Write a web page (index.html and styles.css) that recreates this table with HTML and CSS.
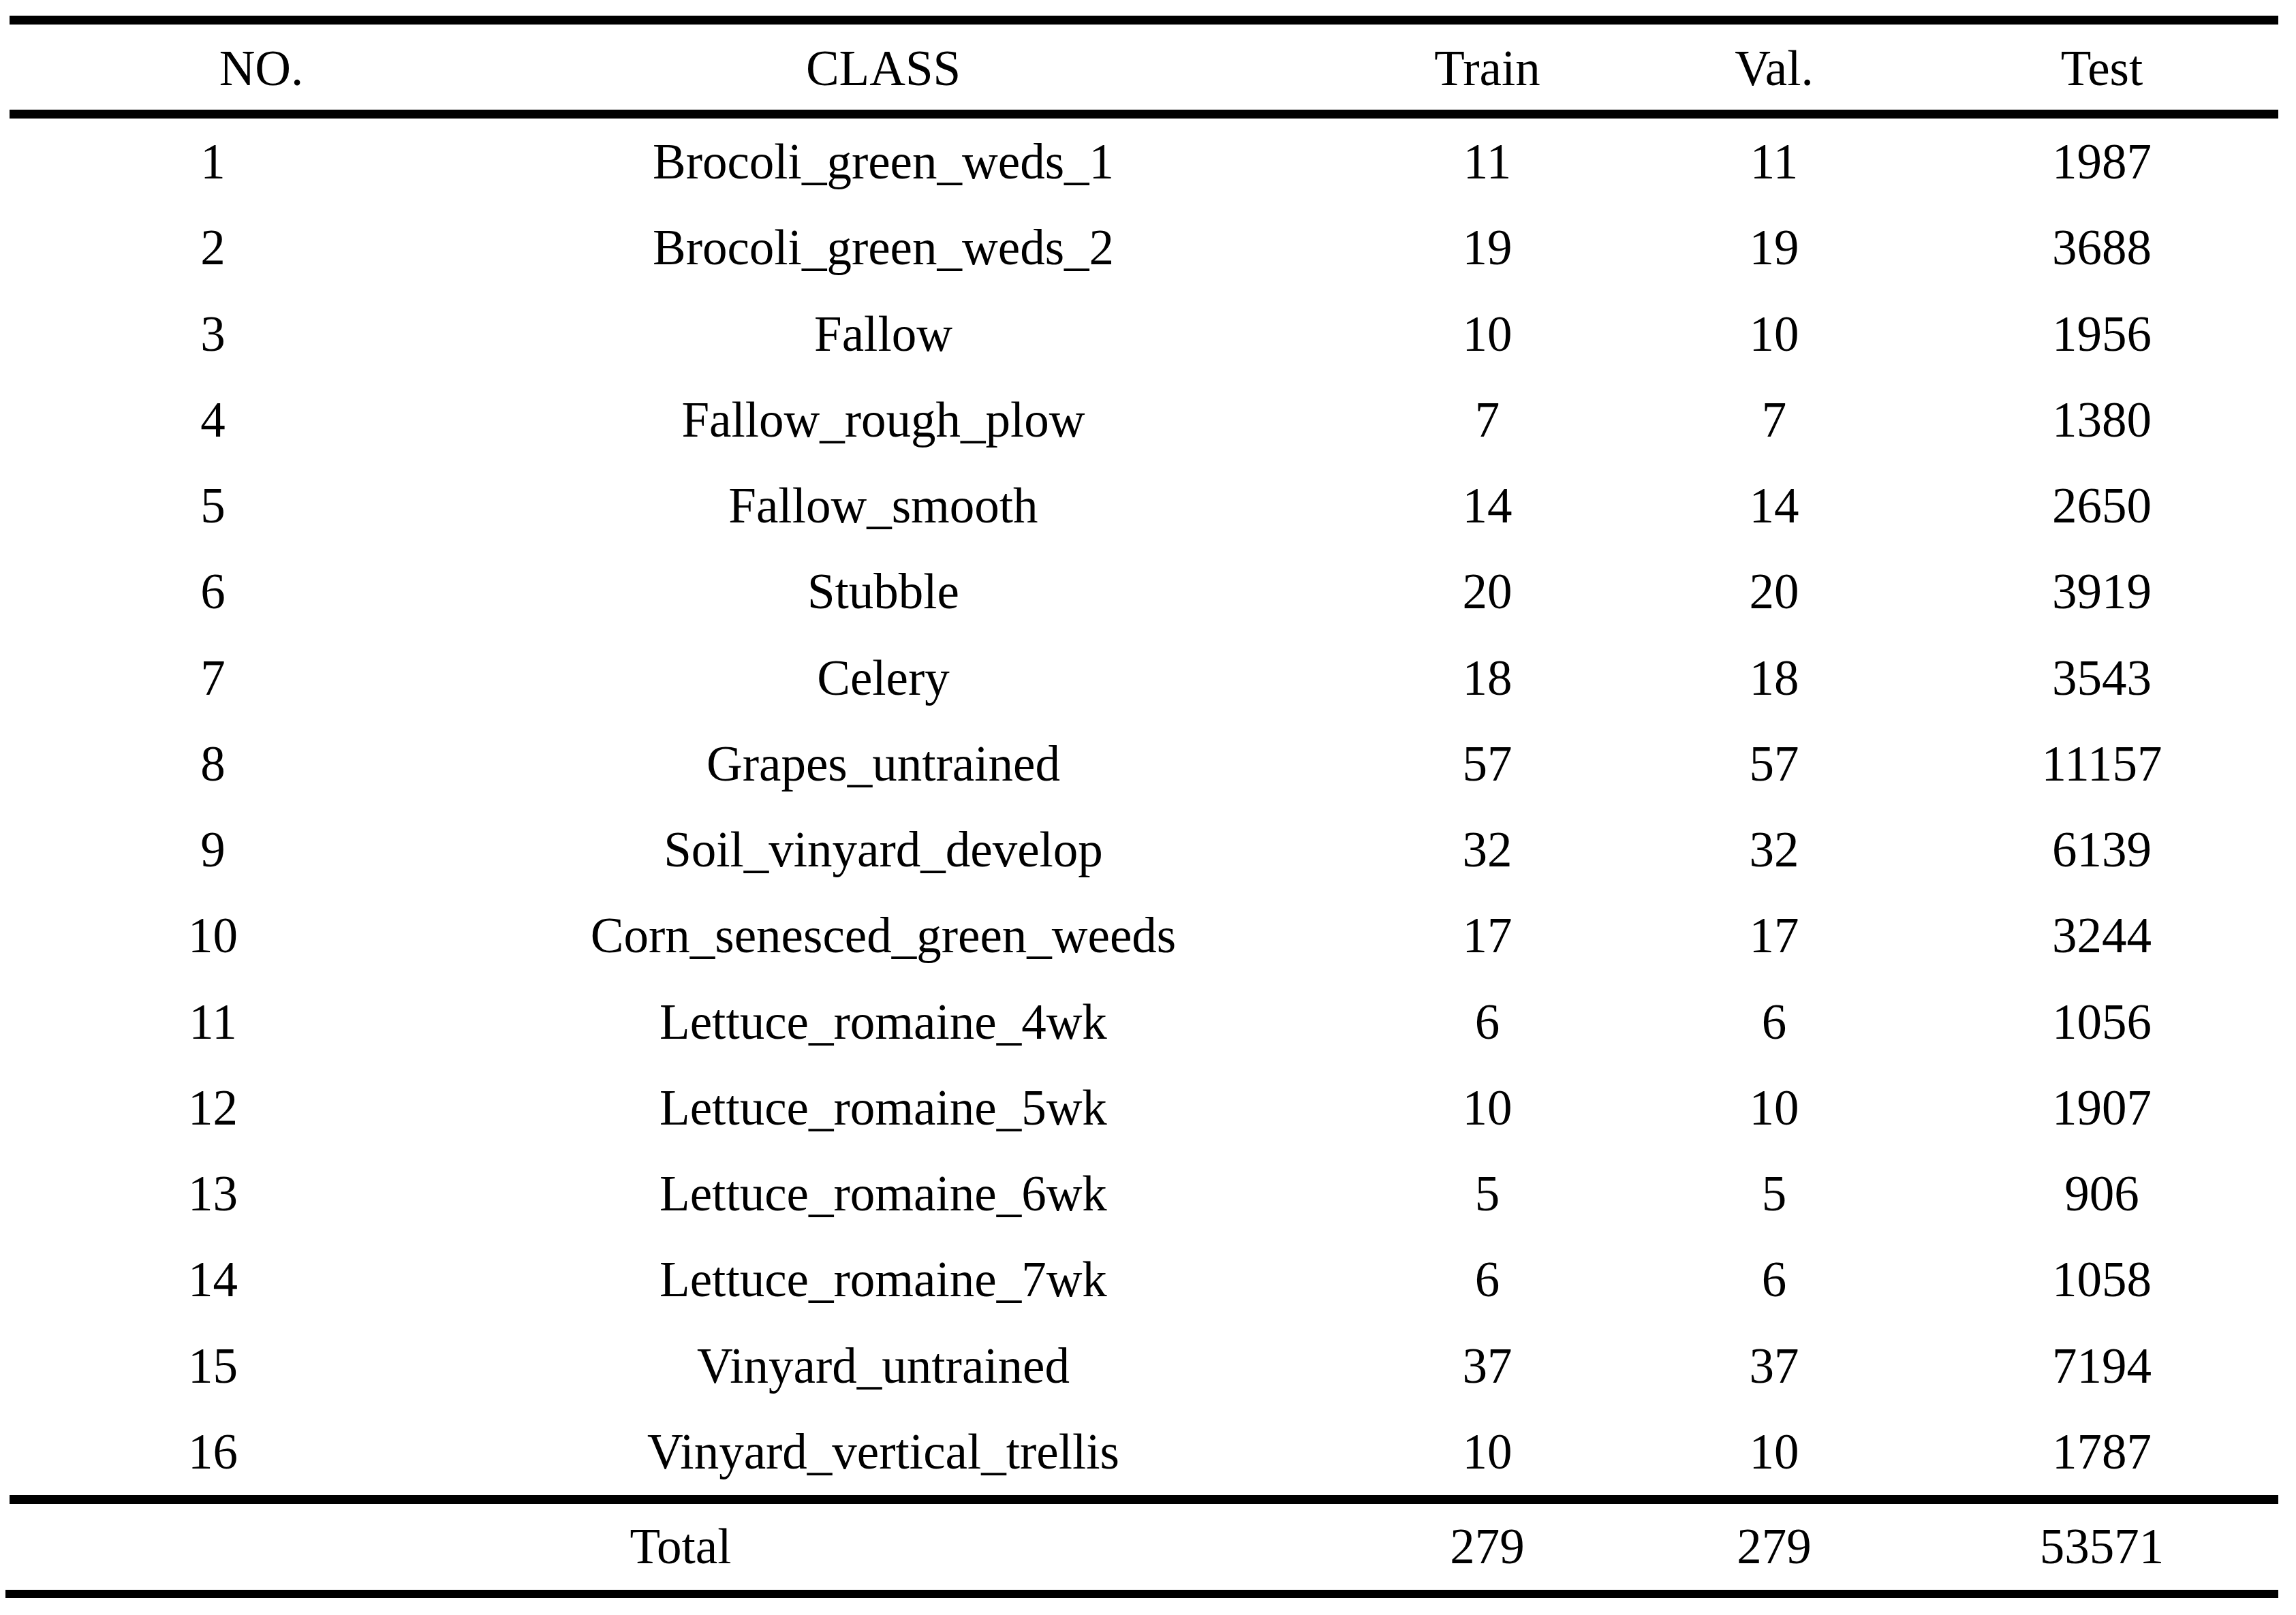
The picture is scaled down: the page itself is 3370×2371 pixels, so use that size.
FILE: index.html
```html
<!DOCTYPE html>
<html>
<head>
<meta charset="utf-8">
<link rel="stylesheet" href="styles.css">
</head>
<body>
<div class="table">
  <div class="rule rule-top"></div>
  <div class="row head">
    <div class="c-no-h">NO.</div>
    <div class="c-class">CLASS</div>
    <div>Train</div>
    <div>Val.</div>
    <div>Test</div>
  </div>
  <div class="rule"></div>
  <div class="body">
    <div class="row"><div class="c-no">1</div><div class="c-class">Brocoli_green_weds_1</div><div>11</div><div>11</div><div>1987</div></div>
    <div class="row"><div class="c-no">2</div><div class="c-class">Brocoli_green_weds_2</div><div>19</div><div>19</div><div>3688</div></div>
    <div class="row"><div class="c-no">3</div><div class="c-class">Fallow</div><div>10</div><div>10</div><div>1956</div></div>
    <div class="row"><div class="c-no">4</div><div class="c-class">Fallow_rough_plow</div><div>7</div><div>7</div><div>1380</div></div>
    <div class="row"><div class="c-no">5</div><div class="c-class">Fallow_smooth</div><div>14</div><div>14</div><div>2650</div></div>
    <div class="row"><div class="c-no">6</div><div class="c-class">Stubble</div><div>20</div><div>20</div><div>3919</div></div>
    <div class="row"><div class="c-no">7</div><div class="c-class">Celery</div><div>18</div><div>18</div><div>3543</div></div>
    <div class="row"><div class="c-no">8</div><div class="c-class">Grapes_untrained</div><div>57</div><div>57</div><div>11157</div></div>
    <div class="row"><div class="c-no">9</div><div class="c-class">Soil_vinyard_develop</div><div>32</div><div>32</div><div>6139</div></div>
    <div class="row"><div class="c-no">10</div><div class="c-class">Corn_senesced_green_weeds</div><div>17</div><div>17</div><div>3244</div></div>
    <div class="row"><div class="c-no">11</div><div class="c-class">Lettuce_romaine_4wk</div><div>6</div><div>6</div><div>1056</div></div>
    <div class="row"><div class="c-no">12</div><div class="c-class">Lettuce_romaine_5wk</div><div>10</div><div>10</div><div>1907</div></div>
    <div class="row"><div class="c-no">13</div><div class="c-class">Lettuce_romaine_6wk</div><div>5</div><div>5</div><div>906</div></div>
    <div class="row"><div class="c-no">14</div><div class="c-class">Lettuce_romaine_7wk</div><div>6</div><div>6</div><div>1058</div></div>
    <div class="row"><div class="c-no">15</div><div class="c-class">Vinyard_untrained</div><div>37</div><div>37</div><div>7194</div></div>
    <div class="row"><div class="c-no">16</div><div class="c-class">Vinyard_vertical_trellis</div><div>10</div><div>10</div><div>1787</div></div>
  </div>
  <div class="rule"></div>
  <div class="row total">
    <div class="c-total">Total</div>
    <div>279</div>
    <div>279</div>
    <div>53571</div>
  </div>
  <div class="rule rule-bottom"></div>
</div>
</body>
</html>
```

FILE: styles.css
```css
html, body {
  margin: 0;
  padding: 0;
  background: #ffffff;
}

body {
  font-family: "Liberation Serif", "Times New Roman", serif;
  font-size: 73px;
  color: #000000;
}

.table {
  width: 3330px;
  margin-left: 14px;
  padding-top: 23px;
  display: flex;
  flex-direction: column;
}

.rule {
  height: 13px;
  background: #000000;
}

.rule-bottom {
  height: 12px;
  margin-left: -6px;
}

.row {
  display: grid;
  grid-template-columns: 739px 1231px 398px 444px 518px;
  height: 126.25px;
  align-items: center;
  text-align: center;
  white-space: nowrap;
}

.row > div {
  line-height: normal;
}

.head {
  height: 125px;
  padding-top: 5px;
  box-sizing: border-box;
}

.body .row:first-child {
  padding-top: 1px;
}

.total {
  height: 126px;
  grid-template-columns: 1970px 398px 444px 518px;
}

.c-no {
  padding-right: 142px;
}

.c-class {
  padding-right: 144px;
}
```
